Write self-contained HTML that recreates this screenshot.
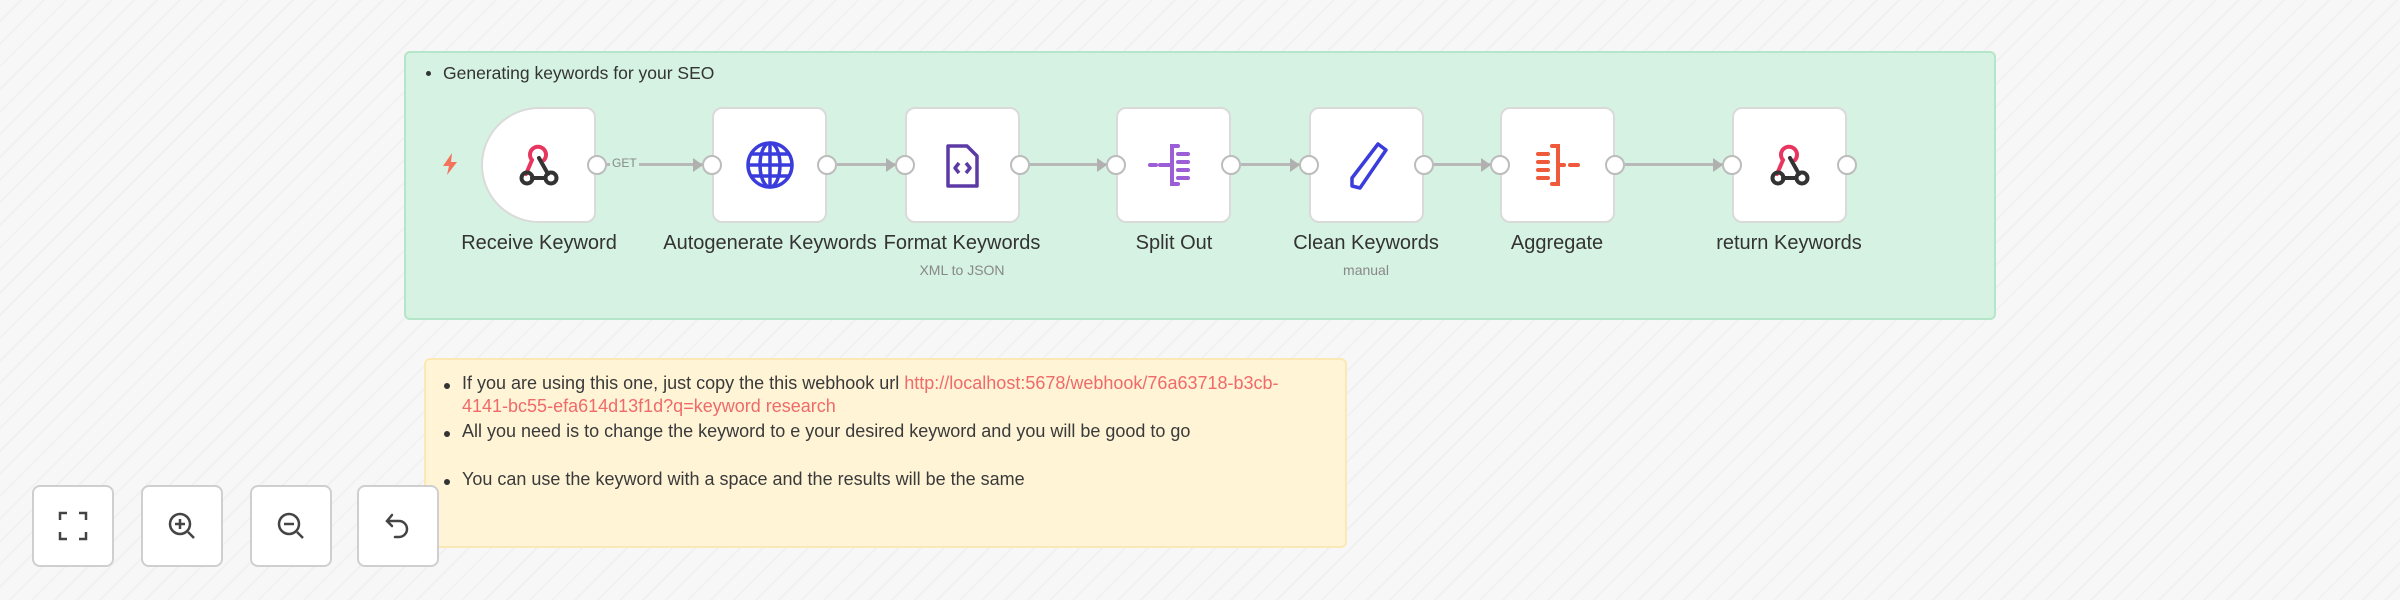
<!DOCTYPE html>
<html><head><meta charset="utf-8"><style>
*{margin:0;padding:0;box-sizing:border-box}
body{width:2400px;height:600px;overflow:hidden;position:relative;font-family:"Liberation Sans",sans-serif;
background:#f6f6f6 repeating-linear-gradient(135deg,#f7f7f7 0 14px,#f1f1f1 14px 16px);}
.abs{position:absolute}
.green{left:404px;top:51px;width:1592px;height:269px;background:#d5f2e2;border:2px solid #b5e6c9;border-radius:6px}
.yellow{left:424px;top:358px;width:923px;height:190px;background:#fff4d6;border:2px solid #fbe9b5;border-radius:6px}
.node{width:115px;height:116px;background:#fff;border:2px solid #dadada;border-radius:10px;top:107px}
.lbl{top:232px;font-size:20px;color:#333;text-align:center;white-space:nowrap;transform:translateX(-50%)}
.sub{top:262px;font-size:14px;color:#888;text-align:center;transform:translateX(-50%)}
.h{width:20px;height:20px;border-radius:50%;background:#fff;border:2px solid #bcbcbc;top:155px}
.line{height:3px;background:#b8b8b8;top:163px}
.arr{width:0;height:0;border-top:7px solid transparent;border-bottom:7px solid transparent;border-left:10px solid #b0b0b0;top:158px}
.btn{top:485px;width:82px;height:82px;background:#fff;border:2px solid #cfcfcf;border-radius:8px;display:flex;align-items:center;justify-content:center}
.t{font-size:18px;color:#3a3a3a;left:462px;white-space:nowrap}
.b{width:6px;height:6px;border-radius:50%;background:#333;left:444px}
</style></head><body>
<div class="abs green"></div>
<div class="abs" style="left:426px;top:71px;width:5px;height:5px;border-radius:50%;background:#333"></div>
<div class="abs" style="left:443px;top:63px;font-size:17.5px;color:#333">Generating keywords for your SEO</div>

<svg class="abs" style="left:440px;top:152px" width="20" height="24" viewBox="0 0 20 24"><path d="M12 1L3 14h6l-2 9 10-13h-6z" fill="#f4735a"/></svg>

<div class="abs line" style="left:607px;width:95px"></div>
<div class="abs line" style="left:837px;width:58px"></div>
<div class="abs line" style="left:1030px;width:76px"></div>
<div class="abs line" style="left:1241px;width:58px"></div>
<div class="abs line" style="left:1434px;width:56px"></div>
<div class="abs line" style="left:1625px;width:97px"></div>
<div class="abs" style="left:610px;top:156px;font-size:12px;color:#888;background:#d5f2e2;padding:0 2px">GET</div>
<div class="abs arr" style="left:693px"></div>
<div class="abs arr" style="left:886px"></div>
<div class="abs arr" style="left:1097px"></div>
<div class="abs arr" style="left:1290px"></div>
<div class="abs arr" style="left:1481px"></div>
<div class="abs arr" style="left:1713px"></div>

<div class="abs node" style="left:481px;border-radius:58px 10px 10px 58px"></div>
<div class="abs node" style="left:712px"></div>
<div class="abs node" style="left:905px"></div>
<div class="abs node" style="left:1116px"></div>
<div class="abs node" style="left:1309px"></div>
<div class="abs node" style="left:1500px"></div>
<div class="abs node" style="left:1732px"></div>

<div class="abs h" style="left:587px"></div>
<div class="abs h" style="left:702px"></div><div class="abs h" style="left:817px"></div>
<div class="abs h" style="left:895px"></div><div class="abs h" style="left:1010px"></div>
<div class="abs h" style="left:1106px"></div><div class="abs h" style="left:1221px"></div>
<div class="abs h" style="left:1299px"></div><div class="abs h" style="left:1414px"></div>
<div class="abs h" style="left:1490px"></div><div class="abs h" style="left:1605px"></div>
<div class="abs h" style="left:1722px"></div><div class="abs h" style="left:1837px"></div>

<svg class="abs" style="left:518px;top:144px" width="42" height="44" viewBox="0 0 42 44" fill="none" stroke-width="4" stroke-linecap="round">
<path d="M14 16a8 8 0 1 1 12 0M14 16l-6 14" stroke="#e8365f"/>
<circle cx="9" cy="34" r="5.5" stroke="#333"/><circle cx="33" cy="34" r="5.5" stroke="#333"/><path d="M21 14l9 16M14 34h12" stroke="#333"/></svg>
<svg class="abs" style="left:745px;top:140px" width="50" height="50" viewBox="0 0 50 50" fill="none" stroke="#3a3ddb" stroke-width="3.5">
<circle cx="25" cy="25" r="22"/><ellipse cx="25" cy="25" rx="10" ry="22"/><path d="M3 25h44M6 14h38M6 36h38M25 3v44"/></svg>
<svg class="abs" style="left:944px;top:143px" width="36" height="46" viewBox="0 0 36 46" fill="none" stroke="#5b3aa6" stroke-width="3.5" stroke-linejoin="round">
<path d="M4 3h19l10 10v30H4z"/><path d="M15 20l-4 5 4 5M22 20l4 5-4 5"/></svg>
<svg class="abs" style="left:1148px;top:142px" width="52" height="46" viewBox="0 0 52 46" fill="none" stroke="#9b5ed6" stroke-width="4" stroke-linecap="round">
<path d="M2 23h6M12 23h6M30 4h-6v38h6M24 23l-6 0M30 12h10M30 20h10M30 28h10M30 36h10"/></svg>
<svg class="abs" style="left:1344px;top:140px" width="46" height="52" viewBox="0 0 46 52" fill="none" stroke="#3a3ddb" stroke-width="3.5" stroke-linejoin="round">
<path d="M34 4l8 6-26 38-8-2 0-8z"/></svg>
<svg class="abs" style="left:1534px;top:142px" width="52" height="46" viewBox="0 0 52 46" fill="none" stroke="#f05a3c" stroke-width="4" stroke-linecap="round">
<path d="M4 12h10M4 20h10M4 28h10M4 36h10M18 4h6v38h-6M24 23h6M36 23h8"/></svg>
<svg class="abs" style="left:1769px;top:144px" width="42" height="44" viewBox="0 0 42 44" fill="none" stroke-width="4" stroke-linecap="round">
<path d="M14 16a8 8 0 1 1 12 0M14 16l-6 14" stroke="#e8365f"/>
<circle cx="9" cy="34" r="5.5" stroke="#333"/><circle cx="33" cy="34" r="5.5" stroke="#333"/><path d="M21 14l9 16M14 34h12" stroke="#333"/></svg>

<div class="abs lbl" style="left:539px">Receive Keyword</div>
<div class="abs lbl" style="left:770px">Autogenerate Keywords</div>
<div class="abs lbl" style="left:962px">Format Keywords</div>
<div class="abs sub" style="left:962px">XML to JSON</div>
<div class="abs lbl" style="left:1174px">Split Out</div>
<div class="abs lbl" style="left:1366px">Clean Keywords</div>
<div class="abs sub" style="left:1366px">manual</div>
<div class="abs lbl" style="left:1557px">Aggregate</div>
<div class="abs lbl" style="left:1789px">return Keywords</div>

<div class="abs yellow"></div>
<div class="abs b" style="top:383px"></div>
<div class="abs t" style="top:373px">If you are using this one, just copy the this webhook url <span style="color:#f06a6a">http://localhost:5678/webhook/76a63718-b3cb-</span></div>
<div class="abs t" style="top:396px;color:#f06a6a">4141-bc55-efa614d13f1d?q=keyword research</div>
<div class="abs b" style="top:431px"></div>
<div class="abs t" style="top:421px">All you need is to change the keyword to e your desired keyword and you will be good to go</div>
<div class="abs b" style="top:479px"></div>
<div class="abs t" style="top:469px">You can use the keyword with a space and the results will be the same</div>

<div class="abs btn" style="left:32px"><svg width="30" height="30" viewBox="0 0 30 30" fill="none" stroke="#444" stroke-width="2.5"><path d="M2 9V2h7M21 2h7v7M28 21v7h-7M9 28H2v-7"/></svg></div>
<div class="abs btn" style="left:141px"><svg width="30" height="30" viewBox="0 0 30 30" fill="none" stroke="#444" stroke-width="2.5"><circle cx="13" cy="13" r="10"/><path d="M21 21l6 6M13 8v10M8 13h10"/></svg></div>
<div class="abs btn" style="left:250px"><svg width="30" height="30" viewBox="0 0 30 30" fill="none" stroke="#444" stroke-width="2.5"><circle cx="13" cy="13" r="10"/><path d="M21 21l6 6M8 13h10"/></svg></div>
<div class="abs btn" style="left:357px"><svg width="30" height="30" viewBox="0 0 30 30" fill="none" stroke="#444" stroke-width="2.5" stroke-linecap="round"><path d="M9 4L4 10l5 5M4 10h12a8 8 0 0 1 0 16h-4"/></svg></div>
</body></html>
